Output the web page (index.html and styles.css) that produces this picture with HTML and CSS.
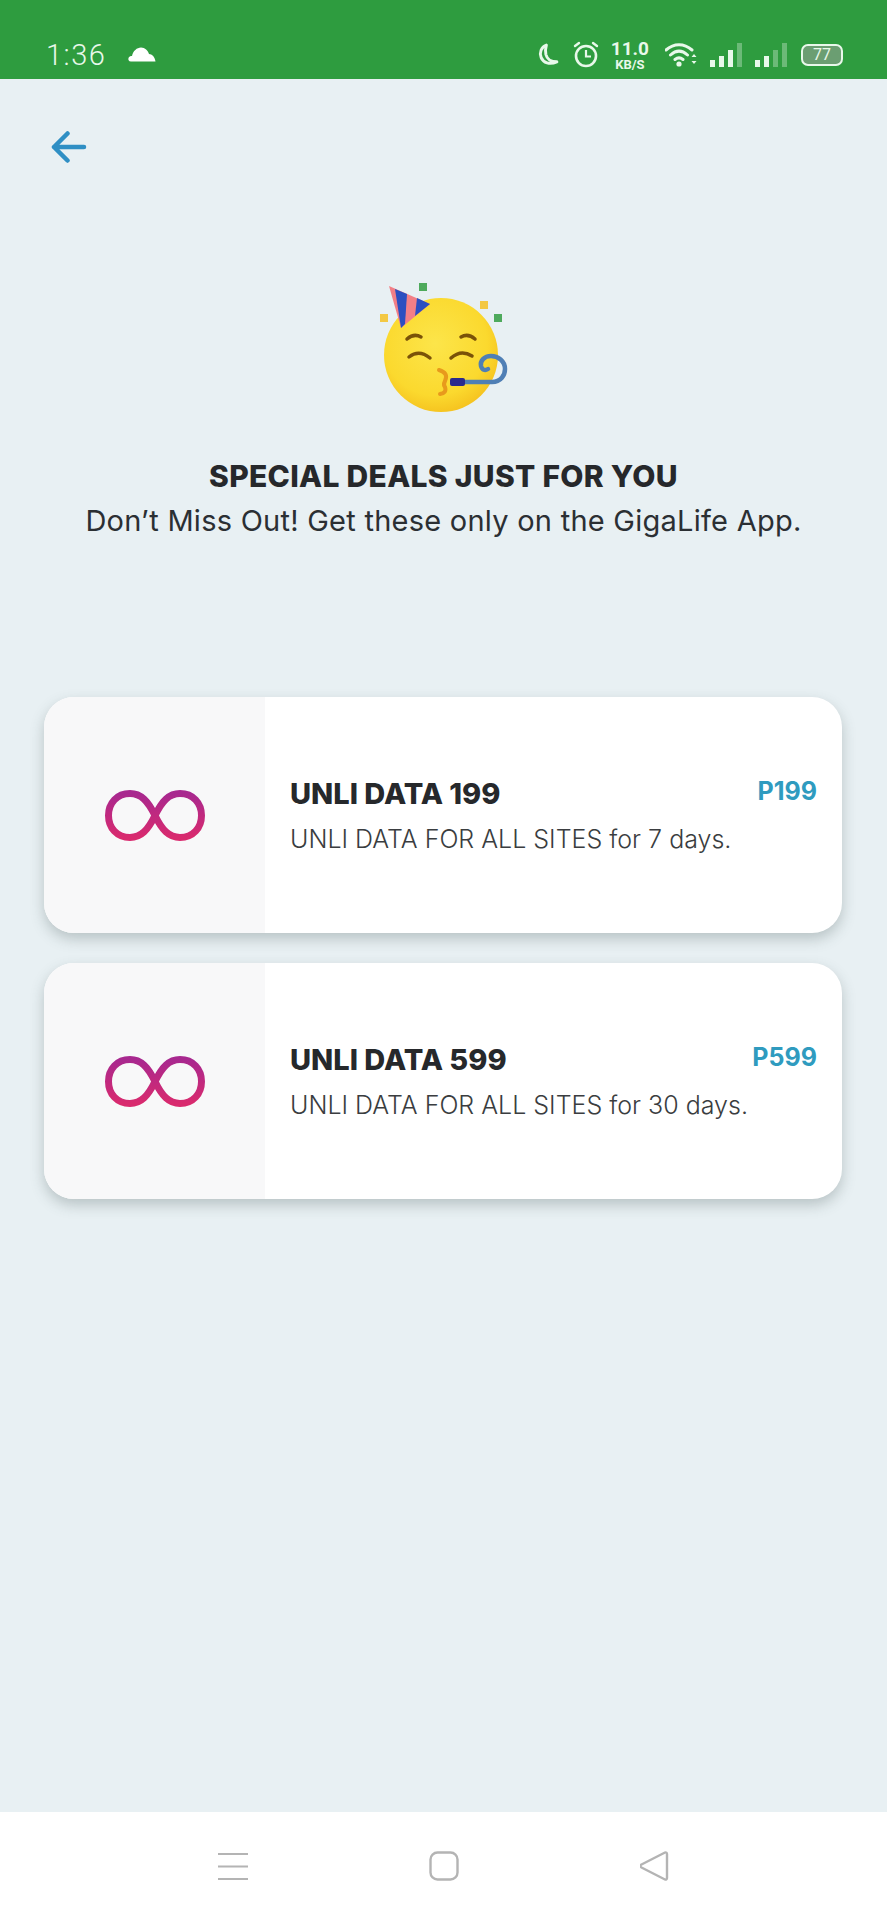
FILE: index.html
```html
<!DOCTYPE html>
<html lang="en">
<head>
    <meta charset="UTF-8">
    <meta name="viewport" content="width=device-width, initial-scale=1.0">
    <title>Special Deals</title>
    <link rel="stylesheet" href="styles.css">
</head>
<body>
    <div class="app">
        <!-- status bar -->
        <div class="status-bar">
            <span class="time">1:36</span>
            <svg class="cloud" width="28" height="16" viewBox="0 0 28 16"><path d="M3 15.500C0.500 15.500 0 13.500 0.500 12C1 10.500 2.500 10 4 10C5 5 9 1.500 13 1.500C17 1.500 20 4.500 21 8C24 8 27 11 27.500 15.500Z" fill="#fff"/></svg>
            <div class="status-icons">
                <svg width="23" height="23" viewBox="0 0 22 22"><path d="M9 2C4 4 2 9 4 14C6 19 12 21 19 18C13 18 9.500 15 8.500 11C8 8 8 5 9 2Z" fill="none" stroke="#e8f8ea" stroke-width="2.800" stroke-linejoin="round"/></svg>
                <svg class="alarm" width="26" height="27" viewBox="0 0 26 27"><circle cx="13" cy="15" r="10" fill="none" stroke="#e8f8ea" stroke-width="2.600"/><path d="M13 9V15.500H18" fill="none" stroke="#e8f8ea" stroke-width="2.200"/><path d="M2 5L6 2M24 5L20 2" stroke="#e8f8ea" stroke-width="2.400" stroke-linecap="round"/></svg>
                <div class="speed">
                    <span class="speed-num">11.0</span>
                    <span class="speed-unit">KB/S</span>
                </div>
                <svg class="wifi" width="34" height="24" viewBox="0 0 34 24"><path d="M1 7C9 0 19 0 27 7M5.500 12C11 7 17 7 22.500 12M10 16.500C12.500 14.500 15.500 14.500 18 16.500" fill="none" stroke="#e8f8ea" stroke-width="3" stroke-linecap="round"/><circle cx="14" cy="21" r="2.600" fill="#e8f8ea"/><path d="M29 11L31.500 14H26.500ZM29 21L31.500 18H26.500Z" fill="#e8f8ea"/></svg>
                <svg class="signal" width="34" height="26" viewBox="0 0 34 26"><rect x="0" y="18" width="5" height="7" fill="#e8f8ea"/><rect x="9" y="14" width="5" height="11" fill="#e8f8ea"/><rect x="18" y="8" width="5" height="17" fill="#e8f8ea"/><rect x="27" y="1" width="5" height="24" fill="#6cba78"/></svg>
                <svg class="signal" width="34" height="26" viewBox="0 0 34 26"><rect x="0" y="18" width="5" height="7" fill="#e8f8ea"/><rect x="9" y="14" width="5" height="11" fill="#e8f8ea"/><rect x="18" y="8" width="5" height="17" fill="#6cba78"/><rect x="27" y="1" width="5" height="24" fill="#6cba78"/></svg>
                <div class="battery">
                    <span>77</span>
                </div>
            </div>
        </div>

        <!-- main content -->
        <div class="content">
            <div class="back">
                <svg width="40" height="32" viewBox="0 0 40 32"><path d="M5 16H35M18.500 2.500L5 16L18.500 29.500" fill="none" stroke="#2f8fc4" stroke-width="4.500" stroke-linecap="round" stroke-linejoin="round"/></svg>
            </div>

            <div class="hero">
                <svg class="emoji" width="180" height="160" viewBox="0 0 180 160">
                    <defs>
                        <radialGradient id="face" cx="0.450" cy="0.400" r="0.650">
                            <stop offset="0" stop-color="#fce54a"/>
                            <stop offset="0.700" stop-color="#fbd92e"/>
                            <stop offset="1" stop-color="#f4be1c"/>
                        </radialGradient>
                    </defs>
                    <ellipse cx="92" cy="90" rx="57" ry="57" fill="url(#face)"/>
                    <polygon points="40,21 81,39 52,63" fill="#f27f86"/>
                    <polygon points="46,24 58,29 56,59 52,63" fill="#2c4fc0"/>
                    <polygon points="68,33 81,39 66,51" fill="#2c4fc0"/>
                    <rect x="70" y="18" width="8" height="8" fill="#4eaa5c"/>
                    <rect x="145" y="49" width="8" height="8" fill="#4eaa5c"/>
                    <rect x="131" y="36" width="8" height="8" fill="#f3c843"/>
                    <rect x="31" y="49" width="8" height="8" fill="#f3c843"/>
                    <path d="M58 74Q65 68 72 72M112 72Q119 68 126 74" fill="none" stroke="#7a5208" stroke-width="3.500" stroke-linecap="round"/>
                    <path d="M60 92Q70 84 81 93M102 93Q112 84 123 91" fill="none" stroke="#7a5208" stroke-width="3.500" stroke-linecap="round"/>
                    <path d="M90 105Q100 108 96 116Q94 120 96 122Q98 128 91 129" fill="none" stroke="#e89a1c" stroke-width="4" stroke-linecap="round"/>
                    <path d="M114 117H143C152 117 156 110 156 104C156 96 149 91 142 91C135 91 131 96 132 101C133 105 136 106 139 104" fill="none" stroke="#4f7fb5" stroke-width="4.500" stroke-linecap="round"/>
                    <rect x="101" y="113" width="15" height="8" rx="2" fill="#2a2a8c"/>
                </svg>
                <h1 class="hero-title">SPECIAL DEALS JUST FOR YOU</h1>
                <p class="hero-sub">Don’t Miss Out! Get these only on the GigaLife App.</p>
            </div>

            <div class="deals">
                <div class="deal-card">
                    <div class="deal-icon">
                        <svg width="100" height="51" viewBox="0 0 100 51">
                            <defs>
                                <linearGradient id="inf" x1="0" y1="0" x2="0" y2="1">
                                    <stop offset="0" stop-color="#a8288f"/>
                                    <stop offset="1" stop-color="#d92a6e"/>
                                </linearGradient>
                            </defs>
                            <path d="M50 25.500C43 11 36 3.500 25 3.500C12 3.500 3.500 13 3.500 25.500C3.500 38 12 47.500 25 47.500C36 47.500 43 40 50 25.500C57 11 64 3.500 75 3.500C88 3.500 96.500 13 96.500 25.500C96.500 38 88 47.500 75 47.500C64 47.500 57 40 50 25.500Z" fill="none" stroke="url(#inf)" stroke-width="7"/>
                        </svg>
                    </div>
                    <div class="deal-body">
                        <div class="deal-head">
                            <span class="deal-name">UNLI DATA 199</span>
                            <span class="deal-price">P199</span>
                        </div>
                        <div class="deal-desc">UNLI DATA FOR ALL SITES for 7 days.</div>
                    </div>
                </div>
                <div class="deal-card">
                    <div class="deal-icon">
                        <svg width="100" height="51" viewBox="0 0 100 51">
                            <path d="M50 25.500C43 11 36 3.500 25 3.500C12 3.500 3.500 13 3.500 25.500C3.500 38 12 47.500 25 47.500C36 47.500 43 40 50 25.500C57 11 64 3.500 75 3.500C88 3.500 96.500 13 96.500 25.500C96.500 38 88 47.500 75 47.500C64 47.500 57 40 50 25.500Z" fill="none" stroke="url(#inf)" stroke-width="7"/>
                        </svg>
                    </div>
                    <div class="deal-body">
                        <div class="deal-head">
                            <span class="deal-name">UNLI DATA 599</span>
                            <span class="deal-price">P599</span>
                        </div>
                        <div class="deal-desc">UNLI DATA FOR ALL SITES for 30 days.</div>
                    </div>
                </div>
            </div>
        </div>

        <!-- nav bar -->
        <div class="nav-bar">
            <svg width="30" height="30" viewBox="0 0 30 30"><path d="M0 3H30M0 15.500H30M0 28H30" stroke="#b4b4b4" stroke-width="2"/></svg>
            <svg width="30" height="30" viewBox="0 0 30 30"><rect x="1.500" y="1.500" width="27" height="27" rx="7" fill="none" stroke="#b4b4b4" stroke-width="2.400"/></svg>
            <svg width="30" height="32" viewBox="0 0 30 32"><path d="M25 2.500C26 2 27 3 27 4V28C27 29 26 30 25 29.500L1.500 17.500C0 16.500 0 15.500 1.500 14.500Z" fill="none" stroke="#b4b4b4" stroke-width="2.400" stroke-linejoin="round"/></svg>
        </div>
    </div>
</body>
</html>
```

FILE: styles.css
```css
body {
    font-family: Inter, "Liberation Sans", sans-serif;
    margin: 0;
    background-color: #e8f0f3;
}
.app {
    height: 1920px;
    display: flex;
    flex-direction: column;
    overflow: hidden;
}
/* status bar */
.status-bar {
    height: 79px;
    box-sizing: border-box;
    padding: 30px 44px 0 46px;
    background-color: #2e9c3f;
    color: #e8f8ea;
    display: flex;
    align-items: center;
}
.time {
    font-family: Roboto, sans-serif;
    font-size: 29px;
    font-weight: 300;
    letter-spacing: 1.500px;
}
.cloud {
    margin-left: 22px;
    margin-bottom: 2px;
}
.status-icons {
    margin-left: auto;
    display: flex;
    align-items: center;
}
.alarm {
    margin-left: 13px;
}
.speed {
    margin-left: 12px;
    display: flex;
    flex-direction: column;
    align-items: center;
    font-family: Roboto, sans-serif;
    font-weight: 700;
}
.speed-num {
    font-size: 19px;
    line-height: 19px;
}
.speed-unit {
    font-size: 13px;
    line-height: 13px;
}
.wifi {
    margin-left: 16px;
}
.signal {
    margin-left: 11px;
}
.battery {
    margin-left: 12px;
    width: 42px;
    height: 22px;
    box-sizing: border-box;
    border: 2.500px solid #e8f8ea;
    border-radius: 7px;
    background-color: #6b9e72;
    font-family: Roboto, sans-serif;
    font-size: 16px;
    line-height: 17px;
    text-align: center;
}
/* main content */
.content {
    flex: 1;
}
.back {
    padding: 52px 0 0 49px;
    height: 31px;
}
.back svg {
    display: block;
}
.hero {
    text-align: center;
    padding: 103px 0 0;
}
.emoji {
    display: block;
    margin: 0 auto;
    transform: translateX(-5px);
}
.hero-title {
    margin: 32px 0 0;
    font-size: 30px;
    font-weight: 800;
    line-height: 38px;
    letter-spacing: 0.300px;
    color: #26282b;
}
.hero-sub {
    margin: 7px 0 0;
    font-size: 29px;
    font-weight: 400;
    line-height: 38px;
    letter-spacing: 0.250px;
    color: #2b2f33;
}
.deals {
    margin-top: 157px;
    padding: 0 45px 0 44px;
    display: flex;
    flex-direction: column;
    gap: 30px;
}
.deal-card {
    height: 236px;
    display: flex;
    background-color: white;
    border-radius: 30px;
    overflow: hidden;
    box-shadow: 0 6px 14px rgba(60,80,80,0.28);
}
.deal-icon {
    width: 221px;
    background-color: #f8f8f9;
    display: flex;
    align-items: center;
    justify-content: center;
}
.deal-body {
    flex: 1;
    padding: 75px 25px 0;
}
.deal-head {
    display: flex;
    justify-content: space-between;
    align-items: center;
}
.deal-name {
    font-size: 29px;
    font-weight: 800;
    line-height: 44px;
    color: #26282b;
}
.deal-price {
    font-size: 25px;
    font-weight: 700;
    color: #2f9bbf;
    margin-bottom: 6px;
}
.deal-desc {
    font-size: 25px;
    font-weight: 300;
    line-height: 46px;
    color: #3a3d40;
}
/* nav bar */
.nav-bar {
    height: 108px;
    background-color: white;
    display: flex;
    align-items: center;
    justify-content: center;
    gap: 181px;
}
```
